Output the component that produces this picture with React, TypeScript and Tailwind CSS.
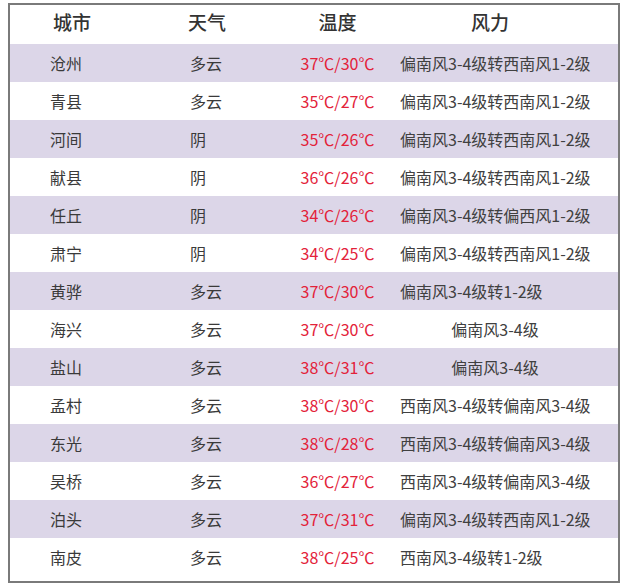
import React from 'react';

type Row = {
  city: string;
  weather: string;
  temp: string;
  wind: string;
  center?: boolean;
};

const rows: Row[] = [
  { city: '沧州', weather: '多云', temp: '37℃/30℃', wind: '偏南风3-4级转西南风1-2级' },
  { city: '青县', weather: '多云', temp: '35℃/27℃', wind: '偏南风3-4级转西南风1-2级' },
  { city: '河间', weather: '阴', temp: '35℃/26℃', wind: '偏南风3-4级转西南风1-2级' },
  { city: '献县', weather: '阴', temp: '36℃/26℃', wind: '偏南风3-4级转西南风1-2级' },
  { city: '任丘', weather: '阴', temp: '34℃/26℃', wind: '偏南风3-4级转偏西风1-2级' },
  { city: '肃宁', weather: '阴', temp: '34℃/25℃', wind: '偏南风3-4级转西南风1-2级' },
  { city: '黄骅', weather: '多云', temp: '37℃/30℃', wind: '偏南风3-4级转1-2级' },
  { city: '海兴', weather: '多云', temp: '37℃/30℃', wind: '偏南风3-4级', center: true },
  { city: '盐山', weather: '多云', temp: '38℃/31℃', wind: '偏南风3-4级', center: true },
  { city: '孟村', weather: '多云', temp: '38℃/30℃', wind: '西南风3-4级转偏南风3-4级' },
  { city: '东光', weather: '多云', temp: '38℃/28℃', wind: '西南风3-4级转偏南风3-4级' },
  { city: '吴桥', weather: '多云', temp: '36℃/27℃', wind: '西南风3-4级转偏南风3-4级' },
  { city: '泊头', weather: '多云', temp: '37℃/31℃', wind: '偏南风3-4级转西南风1-2级' },
  { city: '南皮', weather: '多云', temp: '38℃/25℃', wind: '西南风3-4级转1-2级' },
];

const cols = 'grid grid-cols-[170px_100px_115px_200px]';

export default function App() {
  return (
    <div className="w-[626px] h-[586px] bg-white pt-[3px] pl-[8px] font-['Noto_Sans_CJK_SC','Noto_Sans',sans-serif]">
      <div className="w-[612px] h-[580px] border-2 border-[#7a7a7a] pb-[4px]">
        {/* header */}
        <div className={`${cols} h-[39px] items-center pb-[5px] text-[19px] font-medium text-[#333]`}>
          <div className="pl-[43px]">城市</div>
          <div className="pl-[8px]">天气</div>
          <div className="text-center">温度</div>
          <div className="text-center pr-[10px]">风力</div>
        </div>

        {rows.map((r, i) => (
          <div
            key={r.city}
            className={`${cols} h-[38px] items-center pb-[1px] text-[16px] ${i % 2 === 0 ? 'bg-[#dcd6e8]' : 'bg-white'}`}
          >
            <div className="pl-[40px] text-[#3a3a3a]">{r.city}</div>
            <div className="pl-[10px] text-[#3a3a3a]">{r.weather}</div>
            <div className="text-center text-[#e3223a]">{r.temp}</div>
            <div className={`text-[#404040] whitespace-nowrap ${r.center ? 'text-center' : 'pl-[5px]'}`}>
              {r.wind}
            </div>
          </div>
        ))}
      </div>
    </div>
  );
}
